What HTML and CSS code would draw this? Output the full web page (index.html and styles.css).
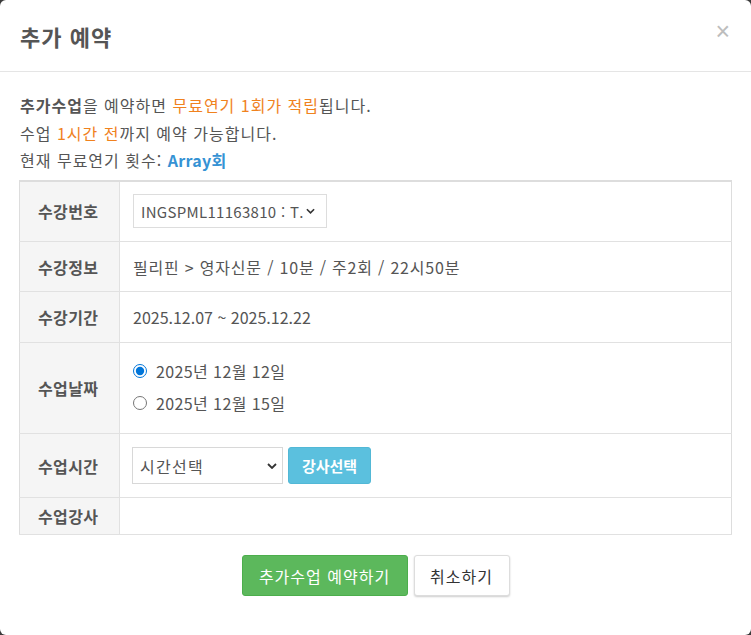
FILE: index.html
```html
<!DOCTYPE html>
<html lang="ko">
<head>
<meta charset="utf-8">
<title>추가 예약</title>
<link rel="stylesheet" href="styles.css">
</head>
<body>
<div class="modal">
  <div class="modal-header">
    <h4 class="modal-title">추가 예약</h4>
    <button class="close" type="button">×</button>
  </div>
  <div class="modal-body">
    <div class="notice">
      <p><b>추가수업</b>을 예약하면 <span class="orange">무료연기 1회가 적립</span>됩니다.</p>
      <p>수업 <span class="orange">1시간 전</span>까지 예약 가능합니다.</p>
      <p>현재 무료연기 횟수: <b class="blue">Array회</b></p>
    </div>
    <table class="info">
      <tr class="r1">
        <th>수강번호</th>
        <td>
          <span class="sel sel-course">
            <select><option>INGSPML11163810 : T.</option></select>
            <svg class="chev" viewBox="0 0 10 6" width="9" height="6"><path d="M1 1l4 4 4-4" fill="none" stroke="#333" stroke-width="1.8"/></svg>
          </span>
        </td>
      </tr>
      <tr class="r2">
        <th>수강정보</th>
        <td class="txt-wide">필리핀 &gt; 영자신문 / 10분 / 주2회 / 22시50분</td>
      </tr>
      <tr class="r3">
        <th>수강기간</th>
        <td class="txt-num">2025.12.07 ~ 2025.12.22</td>
      </tr>
      <tr class="r4">
        <th>수업날짜</th>
        <td>
          <label class="radio"><input type="radio" name="d" checked><span>2025년 12월 12일</span></label>
          <label class="radio"><input type="radio" name="d"><span>2025년 12월 15일</span></label>
        </td>
      </tr>
      <tr class="r5">
        <th>수업시간</th>
        <td>
          <div class="time-row">
            <span class="sel sel-time">
              <select><option>시간선택</option></select>
              <svg class="chev" viewBox="0 0 10 6" width="10" height="6"><path d="M1 1l4 4 4-4" fill="none" stroke="#333" stroke-width="1.8"/></svg>
            </span>
            <button class="btn btn-info" type="button">강사선택</button>
          </div>
        </td>
      </tr>
      <tr class="r6">
        <th>수업강사</th>
        <td></td>
      </tr>
    </table>
    <div class="footer">
      <button class="btn btn-success" type="button">추가수업 예약하기</button>
      <button class="btn btn-default" type="button">취소하기</button>
    </div>
  </div>
</div>
</body>
</html>
```

FILE: styles.css
```css
* { box-sizing: border-box; }
html, body { margin: 0; padding: 0; }
body {
  background: #3a3a3a;
  font-family: "Noto Sans CJK KR", "Noto Sans", sans-serif;
  color: #555;
  font-size: 15px;
}
.modal {
  background: #fff;
  border-radius: 6px;
  height: 635px;
  overflow: hidden;
}
.modal-header {
  height: 72px;
  border-bottom: 1px solid #e5e5e5;
  padding: 0 20px 0 20px;
  display: flex;
  align-items: center;
  justify-content: space-between;
}
.modal-title {
  margin: 0;
  font-size: 22px;
  letter-spacing: 1px;
  font-weight: 700;
  color: #555;
  line-height: 1;
  padding-top: 1px;
}
.close {
  border: 0;
  background: none;
  padding: 0;
  font-family: "Liberation Sans", sans-serif;
  font-size: 25px;
  font-weight: 400;
  color: #bdbdbd;
  line-height: 1;
  margin-right: 1px;
  margin-top: -8px;
}
.modal-body {
  padding: 20px 19px 0 19px;
}
.notice p {
  margin: 0;
  line-height: 27.5px;
  font-size: 16px;
  letter-spacing: 1px;
  padding-left: 1px;
}
.notice b { color: #555; }
.notice .orange { color: #f0821e; }
.notice .blue { color: #3592d4; letter-spacing: 0.3px; }
.notice { margin-bottom: 5px; }

.info {
  width: 713px;
  border-collapse: collapse;
  border-top: 2px solid #ddd;
  border-left: 1px solid #ddd;
  border-right: 1px solid #ddd;
}
.info th, .info td {
  border-bottom: 1px solid #e1e1e1;
  font-size: 16px;
  letter-spacing: 0.4px;
  line-height: 22px;
  vertical-align: middle;
  text-align: left;
}
.info th {
  width: 100px;
  background: #f5f5f5;
  border-right: 1px solid #e1e1e1;
  text-align: left;
  font-weight: 700;
  font-size: 16px;
  letter-spacing: 0.4px;
  color: #555;
  padding: 0 0 0 18px;
}
.info td { padding: 0 13px; color: #555; }
.info td.txt-wide { letter-spacing: 0.8px; }
.info td.txt-num { letter-spacing: 0; }
.r1 { height: 61px; }
.r2 { height: 50px; }
.r3 { height: 51px; }
.r4 { height: 91px; }
.r5 { height: 64px; }
.r6 { height: 37px; }

.sel {
  position: relative;
  display: inline-block;
  vertical-align: middle;
}
.sel select {
  appearance: none;
  -webkit-appearance: none;
  display: block;
  border: 1px solid #ddd;
  background: #fff;
  font-family: "Noto Sans CJK KR", "Noto Sans", sans-serif;
  font-size: 15px;
  color: #555;
  padding: 0 0 0 7px;
  border-radius: 0;
  outline: none;
}
.sel-course select {
  width: 194px;
  height: 34px;
  font-size: 15px;
  letter-spacing: 0.3px;
}
.sel-time select {
  width: 151px;
  height: 37px;
  border-color: #d8d8d8;
  font-size: 16px;
  letter-spacing: 1.3px;
}
.sel .chev {
  position: absolute;
  top: 50%;
  margin-top: -3px;
  pointer-events: none;
}
.sel-course .chev { right: 12px; }
.sel-time .chev { right: 6px; }

.radio {
  display: flex;
  align-items: center;
  height: 32px;
}
.radio input {
  margin: 0 9px 0 0;
  width: 14px;
  height: 14px;
  accent-color: #0075d9;
  position: relative;
  top: -1px;
}
.radio span { position: relative; top: -1px; }
.time-row {
  display: flex;
  align-items: center;
  gap: 5px;
  margin-left: -1px;
}
.btn {
  font-family: "Noto Sans CJK KR", "Noto Sans", sans-serif;
  border-radius: 3px;
  cursor: pointer;
}
.btn-info {
  background: #5bc0de;
  border: 1px solid #52b8d6;
  color: #fff;
  font-weight: 700;
  font-size: 15px;
  width: 83px;
  height: 37px;
  padding: 0;
}
.footer {
  display: flex;
  justify-content: center;
  gap: 6px;
  padding-top: 20px;
}
.btn-success {
  background: #5cb85c;
  border: 1px solid #4cae4c;
  color: #fff;
  font-size: 16px;
  letter-spacing: 1px;
  width: 166px;
  height: 41px;
  padding: 0;
}
.btn-default {
  background: #fff;
  border: 1px solid #ddd;
  box-shadow: 0 1px 2px rgba(0,0,0,0.2);
  color: #333;
  font-size: 16px;
  letter-spacing: 1px;
  width: 96px;
  height: 41px;
  padding: 0;
}
```
